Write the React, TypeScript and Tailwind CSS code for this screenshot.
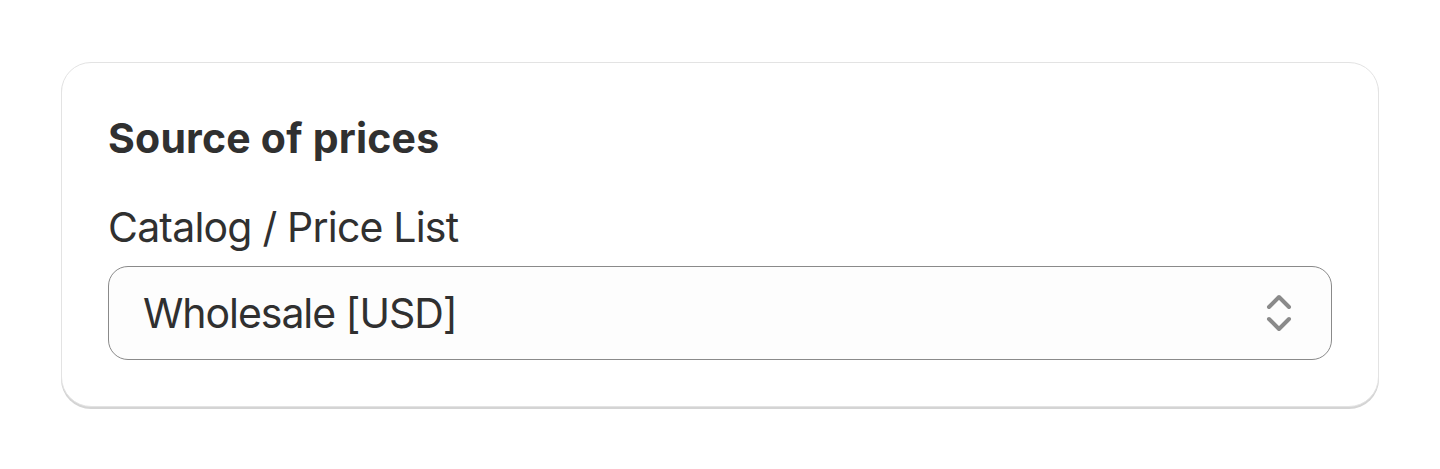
import React from "react";

export default function App() {
  return (
    <div className="w-[1440px] h-[469px] bg-white pt-[62px] pl-[61px]" style={{ fontFamily: "Inter, 'Noto Sans', sans-serif" }}>
      <div className="w-[1318px] rounded-[30px] bg-white border border-[#e3e3e3] shadow-[0_2px_0_0_#d4d4d4] px-[46px] pt-[51px] pb-[46px]">
        <h2 className="text-[41px] leading-[48px] font-bold text-[#303030] tracking-[0.2px]">Source of prices</h2>
        <div className="mt-[41px] text-[41px] leading-[48px] text-[#303030] tracking-[-0.8px]">Catalog / Price List</div>
        <div className="mt-[15px] h-[94px] rounded-[20px] border-[1.5px] border-[#8a8a8a] bg-[#fdfdfd] flex items-center justify-between pl-[34px] pr-[39px]">
          <span className="text-[41px] leading-[48px] text-[#303030] tracking-[-1.05px]">Wholesale [USD]</span>
          <svg width="26" height="40" viewBox="0 0 26 40" fill="none" stroke="#8a8a8a" strokeWidth="4" strokeLinecap="round" strokeLinejoin="round">
            <path d="M3 14 L13 4 L23 14" />
            <path d="M3 26 L13 36 L23 26" />
          </svg>
        </div>
      </div>
    </div>
  );
}
